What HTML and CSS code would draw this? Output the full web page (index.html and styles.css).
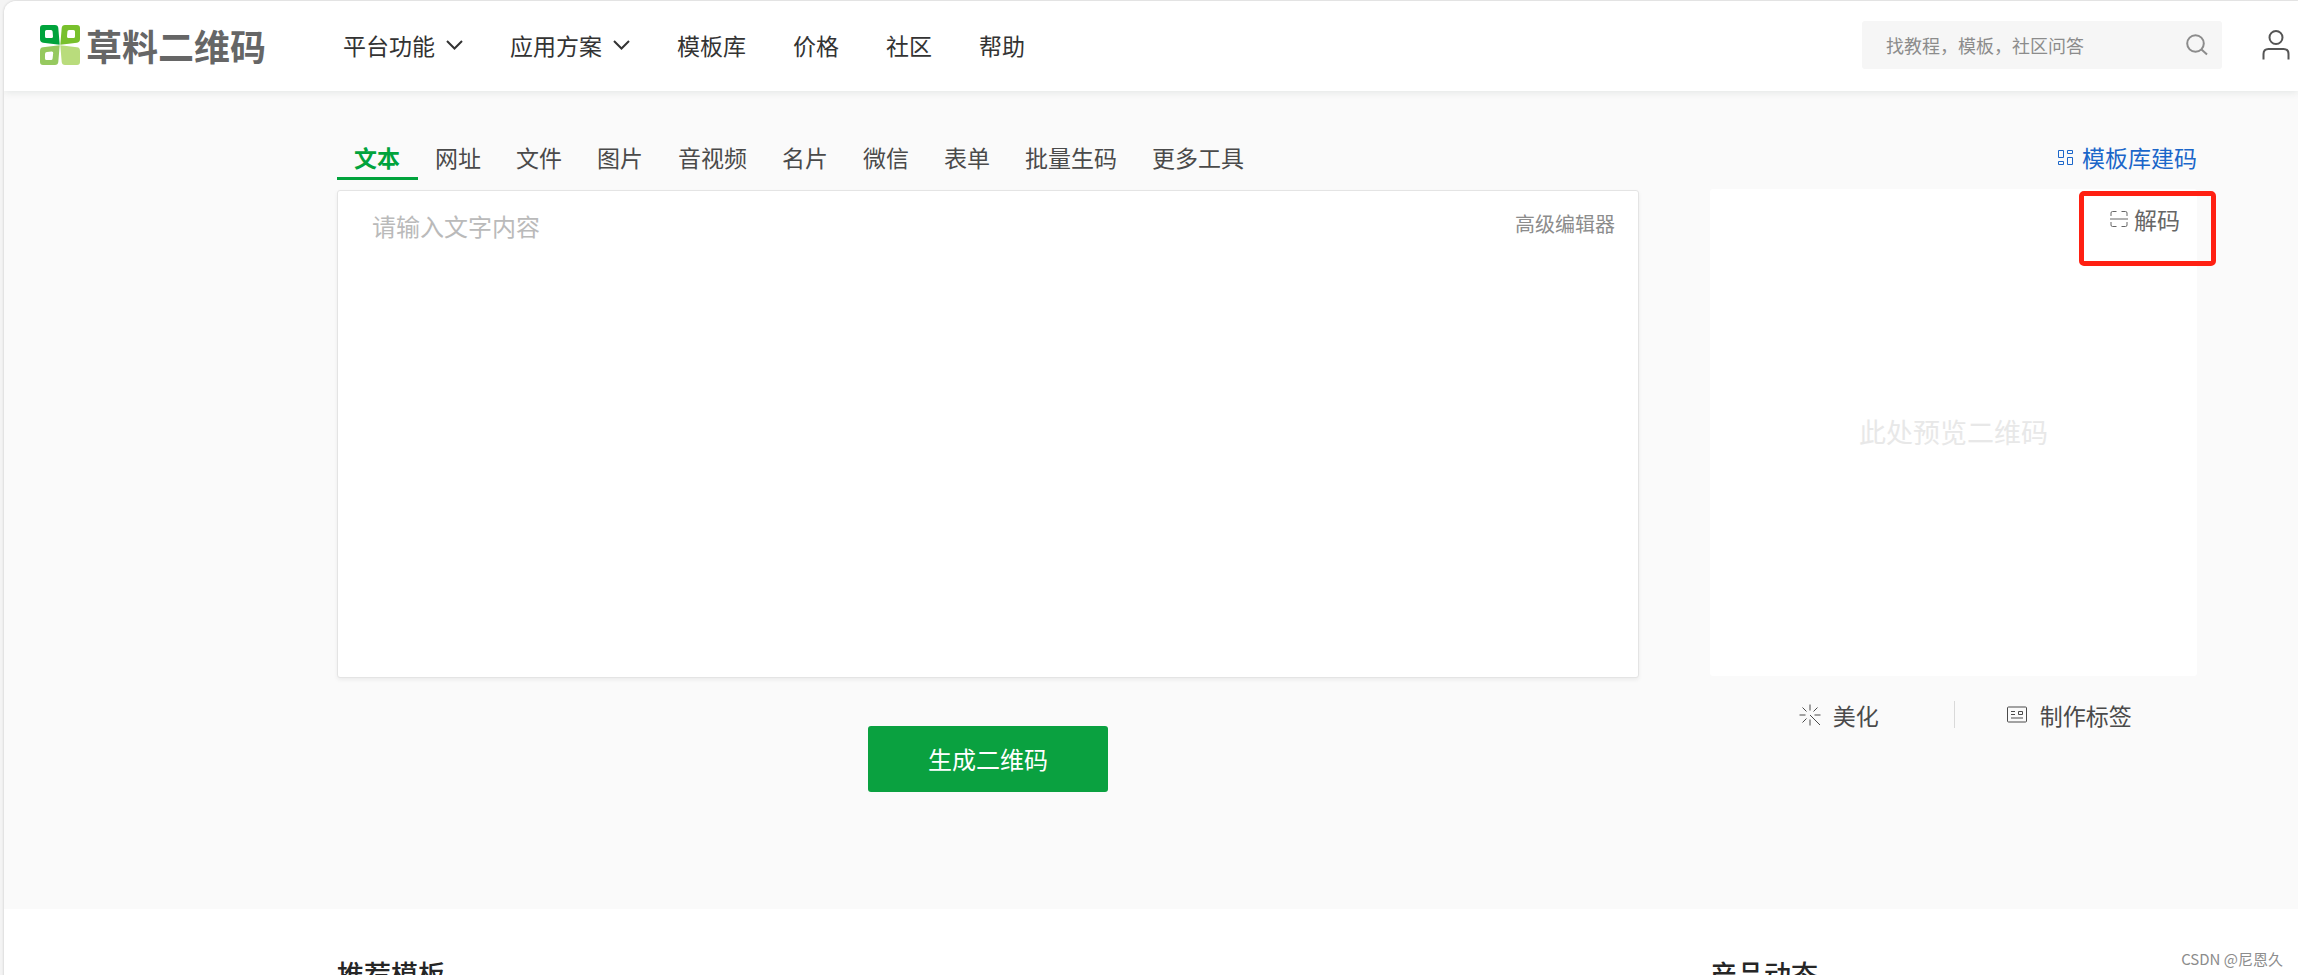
FILE: index.html
```html
<!DOCTYPE html>
<html lang="zh-CN">
<head>
<meta charset="utf-8">
<title>草料二维码</title>
<link rel="stylesheet" href="styles.css">
</head>
<body>
<div class="window">
  <header class="header">
    <a class="logo" href="#">
      <svg class="logo-mark" viewBox="0 0 40 40" aria-hidden="true">
        <path fill="#00a33c" fill-rule="evenodd" d="M3 0H15Q18 0 18.300 3L19.700 19.700L3 17.700Q0 17.400 0 14V3Q0 0 3 0ZM6.500 5Q5 5 5 6.500V11.500Q5 13 6.500 13H11.500Q13 13 13 11.500L12.600 6.500Q12.500 5 11 5Z"/>
        <path fill="#78c02c" fill-rule="evenodd" d="M25 0H37Q40 0 40 3V14Q40 17.400 37 17.700L20.300 19.700L21.700 3Q22 0 25 0ZM29 5Q27.500 5 27.400 6.500L27 11.500Q27 13 28.500 13H33.500Q35 13 35 11.500V6.500Q35 5 33.500 5Z"/>
        <path fill="#96c95f" fill-rule="evenodd" d="M3 22.300L19.700 20.300L18.300 37Q18 40 15 40H3Q0 40 0 37V26Q0 22.600 3 22.300ZM7 27Q5 27.200 5 29V33.500Q5 35 6.500 35H11Q12.500 35 12.600 33.500L13.200 28Q13.300 26.300 11.500 26.500Z"/>
        <path fill="#b9dc7c" d="M20.300 20.300L37 22.300Q40 22.600 40 26V37Q40 40 37 40H25Q22 40 21.700 37Z"/>
      </svg>
      <span class="logo-text">草料二维码</span>
    </a>
    <nav class="nav">
      <a class="nav-link" href="#">平台功能<svg class="chevron" viewBox="0 0 17 12" aria-hidden="true"><path d="M1 2L8.500 9.500L16 2"/></svg></a>
      <a class="nav-link" href="#">应用方案<svg class="chevron" viewBox="0 0 17 12" aria-hidden="true"><path d="M1 2L8.500 9.500L16 2"/></svg></a>
      <a class="nav-link" href="#">模板库</a>
      <a class="nav-link" href="#">价格</a>
      <a class="nav-link" href="#">社区</a>
      <a class="nav-link" href="#">帮助</a>
    </nav>
    <form class="search" role="search">
      <input class="search-input" type="text" aria-label="搜索" placeholder="找教程，模板，社区问答">
      <button class="icon-button" type="button" aria-label="搜索">
        <svg class="search-icon" viewBox="0 0 22 22" aria-hidden="true"><circle cx="9.500" cy="9.500" r="8.300"/><path d="M15.500 15.500L21 20.500"/></svg>
      </button>
    </form>
    <button class="icon-button user" type="button" aria-label="账户">
      <svg class="user-icon" viewBox="0 0 28 30" aria-hidden="true"><circle cx="14" cy="7.500" r="6.500"/><path d="M1.500 29.500V24Q1.500 19 6.500 19H21.500Q26.500 19 26.500 24V29.500"/></svg>
    </button>
  </header>

  <main class="workspace">
    <section class="editor">
      <div class="tabs" role="tablist">
        <button class="tab active" type="button" role="tab" aria-selected="true">文本</button>
        <button class="tab" type="button" role="tab">网址</button>
        <button class="tab" type="button" role="tab">文件</button>
        <button class="tab" type="button" role="tab">图片</button>
        <button class="tab" type="button" role="tab">音视频</button>
        <button class="tab" type="button" role="tab">名片</button>
        <button class="tab" type="button" role="tab">微信</button>
        <button class="tab" type="button" role="tab">表单</button>
        <button class="tab" type="button" role="tab">批量生码</button>
        <button class="tab" type="button" role="tab">更多工具</button>
      </div>
      <div class="text-card">
        <textarea class="text-input" aria-label="文字内容" placeholder="请输入文字内容"></textarea>
        <a class="advanced" href="#">高级编辑器</a>
      </div>
      <button class="generate" type="button">生成二维码</button>
    </section>

    <aside class="side">
      <a class="template-link" href="#">
        <svg class="template-icon" viewBox="0 0 17 17" aria-hidden="true"><path d="M1.500 1.500H6.500V8.500H1.500ZM10.500 1.500H15.500V4.500H10.500ZM1.500 12.500H6.500V15.500H1.500ZM10.500 8.500H15.500V15.500H10.500Z"/></svg>模板库建码
      </a>
      <div class="preview">
        <a class="decode" href="#">
          <svg class="decode-icon" viewBox="0 0 18 18" aria-hidden="true"><path d="M1 6V3Q1 1.500 2.500 1.500H6.500M11.500 1.500H15.500Q17 1.500 17 3V6M1 12V15Q1 16.500 2.500 16.500H6.500M11.500 16.500H15.500Q17 16.500 17 15V12M0 9H18"/></svg>解码
        </a>
        <span class="highlight"></span>
        <p class="preview-hint">此处预览二维码</p>
      </div>
      <div class="actions">
        <button class="action" type="button">
          <svg class="action-icon" viewBox="0 0 22 22" aria-hidden="true"><path d="M11 0.500V6.500M0.500 11H6.500M15.500 11H21.500M11 15.500V21.500M3.500 3.500L7.500 7.500M18.500 3.500L14.500 7.500M3.500 18.500L7.500 14.500M11 11L21 21"/></svg>美化
        </button>
        <button class="action" type="button">
          <svg class="action-icon" viewBox="0 0 22 22" aria-hidden="true"><path d="M2.500 3H19.500Q20.500 3 20.500 4V17Q20.500 18 19.500 18H2.500Q1.500 18 1.500 17V4Q1.500 3 2.500 3ZM5 7.500H9M5 10.500H9M5 14H17M12.500 7.500H16.500V10.500H12.500Z"/></svg>制作标签
        </button>
      </div>
    </aside>
  </main>

  <section class="more">
    <h2 class="more-title more-main">推荐模板</h2>
    <h2 class="more-title more-side">产品动态</h2>
  </section>
</div>
<span class="watermark">CSDN @尼恩久</span>
</body>
</html>
```
FILE: styles.css
```css
* {
  box-sizing: border-box;
}

body {
  margin: 0;
  height: 100vh;
  padding: 1px 0 0 4px;
  overflow: hidden;
  position: relative;
  background: #f4f4f4;
  font-family: "Noto Sans CJK SC", sans-serif;
  font-size: 23px;
  line-height: 32px;
  color: #4a4a4a;
}

a {
  color: inherit;
  text-decoration: none;
}

button,
input,
textarea {
  font: inherit;
  color: inherit;
  border: 0;
  padding: 0;
  background: none;
  outline: 0;
}

svg {
  fill: none;
  stroke: currentColor;
  flex: none;
}

.window {
  min-height: 100%;
  border-radius: 12px 0 0 0;
  background: #fff;
  box-shadow: 0 0 2px 1px #dedede;
  overflow: hidden;
}

.header {
  position: relative;
  display: flex;
  align-items: center;
  height: 90px;
  padding: 0 8px 2px 36px;
  background: #fff;
  box-shadow: 0 1px 8px rgba(0, 40, 30, 0.1);
}

.logo {
  display: flex;
  align-items: center;
  gap: 6px;
  width: 303px;
}

.logo-mark {
  width: 40px;
  height: 40px;
  stroke: none;
}

.logo-text {
  font-size: 36px;
  font-weight: 700;
  color: #666;
}

.nav {
  display: flex;
  gap: 47px;
  color: #333;
}

.nav-link {
  display: flex;
  align-items: center;
  gap: 11px;
}

.chevron {
  width: 17px;
  height: 12px;
  stroke-width: 2;
}

.search {
  display: flex;
  align-items: center;
  width: 360px;
  height: 48px;
  margin-left: auto;
  padding: 0 14px 0 24px;
  border-radius: 3px;
  background: #f6f6f6;
}

.search-input {
  flex: 1;
  min-width: 0;
  font-size: 18px;
}

.search-input::placeholder {
  color: #8c8c8c;
}

.icon-button {
  display: flex;
}

.search-icon {
  width: 22px;
  height: 22px;
  stroke: #8c8c8c;
  stroke-width: 2;
}

.user {
  margin-left: 40px;
}

.user-icon {
  width: 28px;
  height: 30px;
  stroke: #555;
  stroke-width: 2;
}

.workspace {
  display: flex;
  gap: 71px;
  padding: 42px 101px 117px 333px;
  background: #fafafa;
}

.editor {
  flex: 1;
  display: flex;
  flex-direction: column;
}

.tabs {
  display: flex;
  height: 57px;
  align-items: flex-start;
}

.tab {
  height: 47px;
  padding: 8px 18px 4px 17px;
  border-bottom: 3px solid transparent;
}

.tab.active {
  border-color: #00a33c;
  color: #00a33c;
  font-weight: 700;
}

.text-card {
  display: flex;
  align-items: flex-start;
  height: 488px;
  padding: 17px 23px 17px 34px;
  border: 1px solid #e4e4e4;
  border-radius: 3px;
  background: #fff;
  box-shadow: 0 2px 4px rgba(0, 0, 0, 0.06);
}

.text-input {
  flex: 1;
  height: 100%;
  font-size: 24px;
  line-height: 36px;
  resize: none;
}

.text-input::placeholder {
  color: #bababa;
}

.advanced {
  font-size: 20px;
  color: #8c8c8c;
}

.generate {
  align-self: center;
  width: 240px;
  height: 66px;
  margin-top: 48px;
  border-radius: 3px;
  background: #0aa140;
  color: #fff;
  font-size: 24px;
}

.side {
  width: 487px;
}

.template-link {
  display: flex;
  align-items: center;
  justify-content: flex-end;
  gap: 8px;
  height: 56px;
  padding-bottom: 8px;
  color: #1b66c9;
}

.template-icon {
  width: 17px;
  height: 17px;
}

.preview {
  position: relative;
  display: flex;
  align-items: center;
  justify-content: center;
  height: 487px;
  padding-bottom: 2px;
  border-radius: 3px;
  background: #fff;
}

.preview-hint {
  margin: 0;
  font-size: 27px;
  color: #e8e8e8;
}

.decode {
  position: absolute;
  top: 14px;
  right: 17px;
  display: flex;
  align-items: center;
  gap: 6px;
  color: #666;
}

.decode-icon {
  width: 18px;
  height: 18px;
}

.highlight {
  position: absolute;
  top: 2px;
  right: -19px;
  width: 137px;
  height: 75px;
  border: 5px solid #ff2012;
  border-radius: 5px;
}

.actions {
  display: grid;
  grid-template-columns: 1fr 1fr;
  margin-top: 25px;
}

.action {
  display: flex;
  align-items: center;
  justify-content: center;
  gap: 12px;
  height: 27px;
  padding-left: 14px;
}

.action + .action {
  padding: 0 14px 0 0;
  border-left: 1px solid #d9d9d9;
}

.action-icon {
  width: 22px;
  height: 22px;
}

.more {
  display: flex;
  gap: 71px;
  padding: 45px 101px 0 333px;
}

.more-title {
  margin: 0;
  font-size: 27px;
  font-weight: 500;
  line-height: 40px;
  color: #262626;
}

.more-main {
  flex: 1;
}

.more-side {
  width: 487px;
}

.watermark {
  position: absolute;
  right: 15px;
  bottom: 6px;
  font-size: 15px;
  line-height: 20px;
  color: #8c8c8c;
}
```
